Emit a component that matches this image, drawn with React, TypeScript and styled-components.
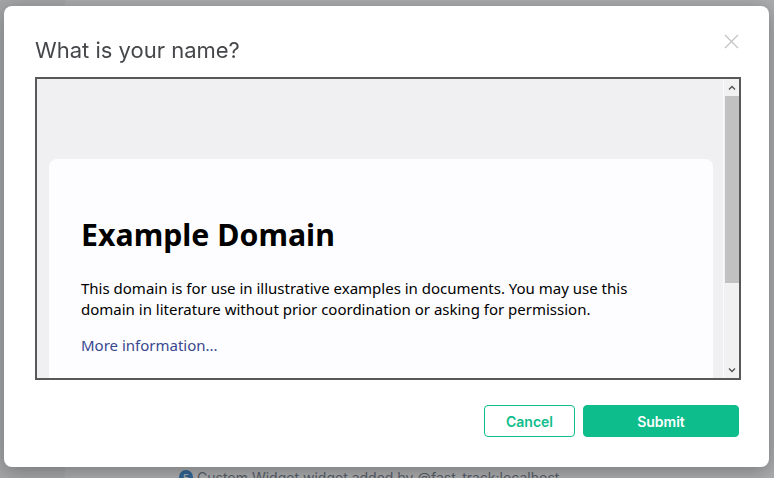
import React from "react";
import styled, { createGlobalStyle } from "styled-components";

const GlobalStyle = createGlobalStyle`
  html, body { margin: 0; padding: 0; height: 100%; }
  body { font-family: Inter, "Noto Sans", sans-serif; background: #ffffff; overflow: hidden; }
  #root { height: 100%; }
`;

/* ---------- background app ---------- */
const AppShell = styled.div`
  display: flex;
  width: 774px;
  height: 478px;
  background: #ffffff;
`;

const SidePanel = styled.div`
  width: 65px;
  background: #f4f5f6;
  flex-shrink: 0;
`;

const Timeline = styled.div`
  flex: 1;
  display: flex;
  flex-direction: column;
  justify-content: flex-end;
  padding: 0 0 0 114px;
`;

const EventLine = styled.div`
  display: flex;
  align-items: center;
  gap: 4px;
  height: 14px;
  margin-bottom: -6px;
  font-size: 14px;
  color: #737d8c;
  white-space: nowrap;
`;

const Avatar = styled.span`
  width: 14px;
  height: 14px;
  border-radius: 50%;
  background: #368bd6;
  color: #fff;
  font-size: 9px;
  font-weight: 600;
  display: inline-flex;
  align-items: center;
  justify-content: center;
`;

/* ---------- overlay + dialog ---------- */
const Overlay = styled.div`
  position: fixed;
  inset: 0;
  background: rgba(46, 48, 51, 0.4);
  display: flex;
  justify-content: flex-start;
  align-items: flex-start;
  padding: 6px 0 0 4px;
`;

const Dialog = styled.div`
  width: 765px;
  height: 461px;
  box-sizing: border-box;
  background: #ffffff;
  border-radius: 8px;
  box-shadow: 0 4px 20px rgba(0, 0, 0, 0.3);
  padding: 32px 30px 30px 31px;
  display: flex;
  flex-direction: column;
`;

const Header = styled.div`
  display: flex;
  justify-content: space-between;
  align-items: flex-start;
  height: 24px;
  margin-bottom: 15px;
`;

const Title = styled.h2`
  margin: 0;
  font-family: Inter, sans-serif;
  font-weight: 400;
  font-size: 22px;
  line-height: 24px;
  color: #45474a;
`;

const CloseButton = styled.button`
  margin-top: -4px;
  width: 15px;
  height: 15px;
  padding: 0;
  border: 0;
  background: transparent;
  display: flex;
`;

const FrameBox = styled.div`
  width: 706px;
  height: 303px;
  box-sizing: border-box;
  border: 2px solid #585858;
  display: flex;
  background: #f0f0f2;
  overflow: hidden;
`;

const FrameContent = styled.div`
  flex: 1;
  overflow: hidden;
  font-family: "Noto Sans", sans-serif;
`;

const Card = styled.div`
  width: 600px;
  margin: 80px 0 0 12px;
  padding: 56px 32px 32px;
  background: #fdfdff;
  border-radius: 8px;
`;

const Heading = styled.h1`
  margin: 0;
  font-size: 30.3px;
  line-height: 40px;
  font-weight: 700;
  color: #000;
`;

const Para = styled.p<{ $gap: number }>`
  margin: ${(p) => p.$gap}px 0 0;
  font-size: 15px;
  line-height: 21px;
  color: #000;
`;

const Link = styled.a`
  color: #38488f;
  text-decoration: none;
`;

const Scrollbar = styled.div`
  width: 15px;
  flex-shrink: 0;
  background: #f1f1f1;
  border-left: 1px solid #fafafa;
  display: flex;
  flex-direction: column;
`;

const ScrollArrow = styled.div`
  height: 17px;
  display: flex;
  align-items: center;
  justify-content: center;
`;

const ScrollThumb = styled.div`
  height: 187px;
  margin: 0 0 0 1px;
  background: #c1c1c1;
`;

const ScrollTrack = styled.div`
  flex: 1;
`;

const Footer = styled.div`
  margin-top: 25px;
  display: flex;
  justify-content: flex-end;
  gap: 8px;
`;

const Button = styled.button<{ $primary?: boolean }>`
  height: 32px;
  box-sizing: border-box;
  border-radius: 4px;
  border: 1px solid #0dbd8b;
  background: ${(p) => (p.$primary ? "#0dbd8b" : "#ffffff")};
  color: ${(p) => (p.$primary ? "#ffffff" : "#0dbd8b")};
  font-family: Inter, sans-serif;
  font-weight: 600;
  font-size: 14px;
  width: ${(p) => (p.$primary ? "156px" : "91px")};
  padding: 0;
`;

const Chevron = ({ up }: { up?: boolean }) => (
  <svg width="8" height="6" viewBox="0 0 8 6">
    <path
      d={up ? "M1 4.5 L4 1.5 L7 4.5" : "M1 1.5 L4 4.5 L7 1.5"}
      fill="none"
      stroke="#505050"
      strokeWidth="1.3"
    />
  </svg>
);

export default function App() {
  return (
    <>
      <GlobalStyle />
      <AppShell>
        <SidePanel />
        <Timeline>
          <EventLine>
            <Avatar>F</Avatar>
            Custom Widget widget added by @fast_track:localhost
          </EventLine>
        </Timeline>
      </AppShell>
      <Overlay>
        <Dialog>
          <Header>
            <Title>What is your name?</Title>
            <CloseButton aria-label="Close">
              <svg width="15" height="15" viewBox="0 0 15 15">
                <path d="M1 1 L14 14 M14 1 L1 14" stroke="#c1c1c1" strokeWidth="1.2" />
              </svg>
            </CloseButton>
          </Header>
          <FrameBox>
            <FrameContent>
              <Card>
                <Heading>Example Domain</Heading>
                <Para $gap={23}>
                  This domain is for use in illustrative examples in documents. You may use this
                  domain in literature without prior coordination or asking for permission.
                </Para>
                <Para $gap={15}>
                  <Link href="#">More information...</Link>
                </Para>
              </Card>
            </FrameContent>
            <Scrollbar>
              <ScrollArrow>
                <Chevron up />
              </ScrollArrow>
              <ScrollThumb />
              <ScrollTrack />
              <ScrollArrow>
                <Chevron />
              </ScrollArrow>
            </Scrollbar>
          </FrameBox>
          <Footer>
            <Button>Cancel</Button>
            <Button $primary>Submit</Button>
          </Footer>
        </Dialog>
      </Overlay>
    </>
  );
}
